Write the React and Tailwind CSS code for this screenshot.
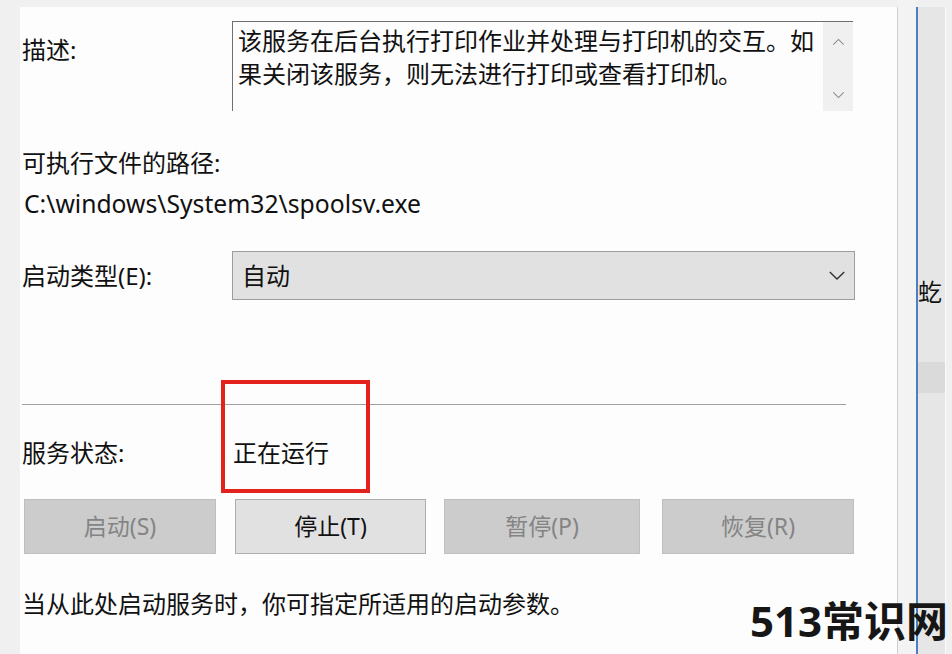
import React from 'react';

const font = { fontFamily: '"Noto Sans", "Noto Sans CJK SC", sans-serif' };

const Chevron = ({ up, className }) => (
  <svg className={className} viewBox="0 0 20 12" fill="none" stroke="currentColor" strokeWidth="1.6">
    {up ? <polyline points="2,10 10,2 18,10" /> : <polyline points="2,2 10,10 18,2" />}
  </svg>
);

const Btn = ({ label, w, disabled }) => (
  <div
    className={`h-[55px] flex items-center justify-center text-[23px] border ${w} ${
      disabled ? 'bg-[#cccccc] border-[#bfbfbf] text-[#848484]' : 'bg-[#e1e1e1] border-[#adadad] text-[#111]'
    }`}
  >
    {label}
  </div>
);

export default function App() {
  return (
    <div className="w-[952px] h-[654px] bg-[#f0f0f0] flex overflow-hidden relative text-[#111]" style={font}>
      {/* left strip */}
      <div className="w-[20px] shrink-0" />

      {/* dialog body */}
      <div className="w-[877px] shrink-0 mt-[7px] bg-[#fdfdfd] pl-[2px] flex flex-col text-[24px] leading-[33px]">
        <div className="flex mt-[14px]">
          <div className="w-[210px] pt-[12px]">描述:</div>
          <div className="w-[621px] h-[90px] border-t border-l border-[#6f6f6f] flex">
            <div className="flex-1 pl-[5px] pt-[2px] whitespace-nowrap">
              该服务在后台执行打印作业并处理与打印机的交互。如
              <br />
              果关闭该服务，则无法进行打印或查看打印机。
            </div>
            <div className="w-[30px] bg-[#f0f0f0] flex flex-col items-center justify-between pt-[16px] pb-[12px] text-[#8a8a8a]">
              <Chevron up className="w-[13px] h-[8px]" />
              <Chevron className="w-[13px] h-[8px]" />
            </div>
          </div>
        </div>

        <div className="mt-[35px]">可执行文件的路径:</div>
        <div className="mt-[8px] pl-[2px] text-[24.7px]">C:\windows\System32\spoolsv.exe</div>

        <div className="flex items-center mt-[31px]">
          <div className="w-[210px]">启动类型(E):</div>
          <div className="w-[623px] h-[49px] bg-[#e1e1e1] border border-[#9e9e9e] flex items-center justify-between pl-[9px] pr-[8px]">
            <span>自动</span>
            <Chevron className="w-[18px] h-[11px] text-[#333]" />
          </div>
        </div>

        <div className="mt-[104px] w-[824px] h-px bg-[#a0a0a0]" />

        <div className="flex mt-[31px]">
          <div className="w-[211px]">服务状态:</div>
          <div>正在运行</div>
        </div>

        <div className="flex mt-[30px] pl-[2px]">
          <Btn label="启动(S)" w="w-[192px]" disabled />
          <div className="w-[19px]" />
          <Btn label="停止(T)" w="w-[191px]" />
          <div className="w-[18px]" />
          <Btn label="暂停(P)" w="w-[196px]" disabled />
          <div className="w-[22px]" />
          <Btn label="恢复(R)" w="w-[192px]" disabled />
        </div>

        <div className="mt-[33px]">当从此处启动服务时，你可指定所适用的启动参数。</div>
      </div>

      {/* right neighbouring window */}
      <div className="flex-1 flex">
        <div className="w-px bg-[#cfcfcf] mt-[7px]" />
        <div className="w-[18px] bg-[#f3f3f3]" />
        <div className="w-[2px] bg-[#4a7fc1] mt-[7px]" />
        <div className="w-[27px] bg-[#e6e6e6] mt-[7px] flex flex-col">
          <div className="mt-[268px] text-[24px] leading-[33px] whitespace-nowrap">虼</div>
          <div className="mt-[54px] h-[31px] bg-[#dadada]" />
        </div>
        <div className="w-px bg-[#fafafa] mt-[7px]" />
        <div className="flex-1 bg-[#f0f0f0]" />
      </div>

      {/* highlight box */}
      <div className="absolute left-[221px] top-[380px] w-[149px] h-[113px] border-[4px] border-[#e4221d]" />

      {/* watermark */}
      <div className="absolute left-[750px] top-[596px] text-[42px] leading-[50px] font-bold text-[#161616] whitespace-nowrap">
        513常识网
      </div>
    </div>
  );
}
